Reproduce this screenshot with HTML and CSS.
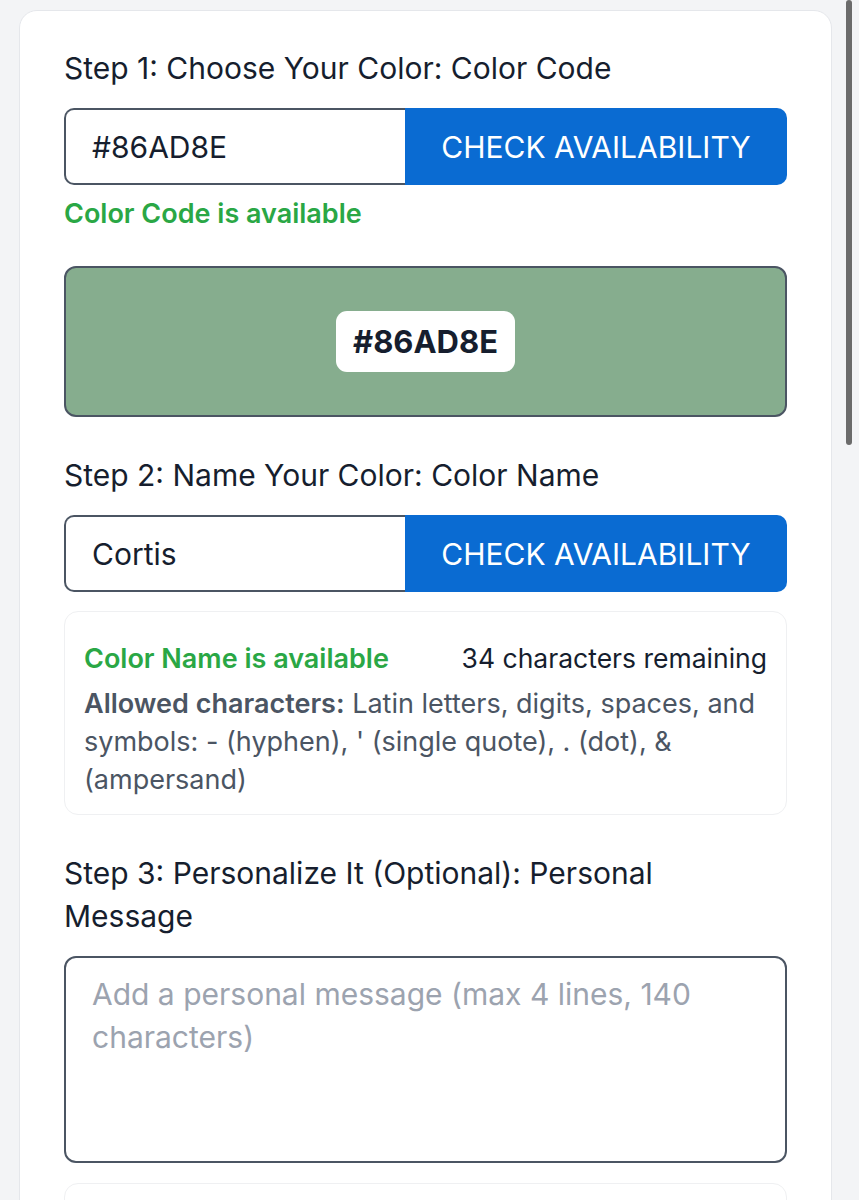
FILE: index.html
```html
<!DOCTYPE html>
<html lang="en">
<head>
<meta charset="utf-8">
<title>Choose Your Color</title>
<link rel="stylesheet" href="styles.css">
</head>
<body>
<div class="card">
  <section class="step step-first">
    <h2 class="step-title">Step 1: Choose Your Color: Color Code</h2>
    <div class="input-row">
      <input class="text-input" type="text" value="#86AD8E">
      <button class="check-btn" type="button">CHECK AVAILABILITY</button>
    </div>
    <p class="status ok">Color Code is available</p>
    <div class="swatch" style="background:#86AD8E">
      <span class="swatch-badge">#86AD8E</span>
    </div>
  </section>

  <section class="step">
    <h2 class="step-title">Step 2: Name Your Color: Color Name</h2>
    <div class="input-row">
      <input class="text-input" type="text" value="Cortis">
      <button class="check-btn" type="button">CHECK AVAILABILITY</button>
    </div>
    <div class="info-box">
      <div class="info-head">
        <span class="status ok inline">Color Name is available</span>
        <span class="remaining">34 characters remaining</span>
      </div>
      <p class="allowed"><strong>Allowed characters:</strong> Latin letters, digits, spaces, and symbols: - (hyphen), ' (single quote), . (dot), &amp; (ampersand)</p>
    </div>
  </section>

  <section class="step">
    <h2 class="step-title">Step 3: Personalize It (Optional): Personal Message</h2>
    <textarea class="message" placeholder="Add a personal message (max 4 lines, 140 characters)"></textarea>
    <div class="info-box next-box"></div>
  </section>
</div>
<div class="scrollbar"></div>
</body>
</html>
```

FILE: styles.css
```css
* { box-sizing: border-box; }

html, body {
  margin: 0;
  padding: 0;
}

body {
  background: #f3f4f6;
  font-family: Inter, "Noto Sans", "Liberation Sans", sans-serif;
  color: #1f2937;
  overflow: hidden;
  height: 1200px;
}

.card {
  margin: 10px 27px 0 19px;
  background: #ffffff;
  border: 1px solid #e5e7eb;
  border-radius: 18px;
  padding: 36px 44px 40px;
}

.step { margin-top: 37px; }
.step-first { margin-top: 0; }

.step-title {
  margin: 0 0 18px;
  font-size: 30px;
  line-height: 43px;
  font-weight: 400;
  color: #161e2e;
}

.input-row {
  display: flex;
  height: 77px;
}

.text-input {
  flex: 0 0 341px;
  min-width: 0;
  height: 77px;
  border: 2px solid #4b5563;
  border-right: none;
  border-radius: 10px 0 0 10px;
  padding: 0 20px 0 26px;
  font-family: inherit;
  font-size: 30px;
  color: #161e2e;
  background: #fff;
  outline: none;
}

.check-btn {
  flex: 1;
  height: 77px;
  border: none;
  border-radius: 0 10px 10px 0;
  background: #0a6bd2;
  color: #ffffff;
  font-family: inherit;
  font-size: 30px;
  font-weight: 400;
  padding: 0;
}

.status {
  margin: 10px 0 0;
  font-size: 27px;
  line-height: 38px;
  font-weight: 600;
}

.ok { color: #2aa745; }

.status.inline { margin: 0; }

.swatch {
  margin-top: 33px;
  height: 151px;
  border: 2px solid #4b5563;
  border-radius: 12px;
  display: flex;
  align-items: center;
  justify-content: center;
}

.swatch-badge {
  background: #ffffff;
  border-radius: 11px;
  height: 61px;
  padding: 0 17px;
  display: flex;
  align-items: center;
  font-size: 31px;
  font-weight: 700;
  color: #161e2e;
}

.info-box {
  margin-top: 19px;
  border: 1px solid #eff0f2;
  border-radius: 14px;
  padding: 27px 19px 15px;
}

.info-head {
  display: flex;
  justify-content: space-between;
  align-items: baseline;
  line-height: 38px;
}

.remaining {
  color: #161e2e;
  font-weight: 400;
  font-size: 26.5px;
}

.allowed {
  margin: 7px 0 0;
  font-size: 27px;
  line-height: 38px;
  color: #4b5563;
}

.allowed strong { font-weight: 600; }

.message {
  display: block;
  width: 100%;
  height: 207px;
  border: 2px solid #4b5563;
  border-radius: 12px;
  padding: 15px 26px;
  font-family: inherit;
  font-size: 30px;
  line-height: 43px;
  color: #161e2e;
  resize: none;
  outline: none;
}

.message::placeholder { color: #9ca3af; }

.next-box {
  margin-top: 20px;
  height: 120px;
}

.scrollbar {
  position: fixed;
  top: 0;
  right: 7px;
  width: 6px;
  height: 445px;
  border-radius: 3px;
  background: #6b6b6b;
}
```
